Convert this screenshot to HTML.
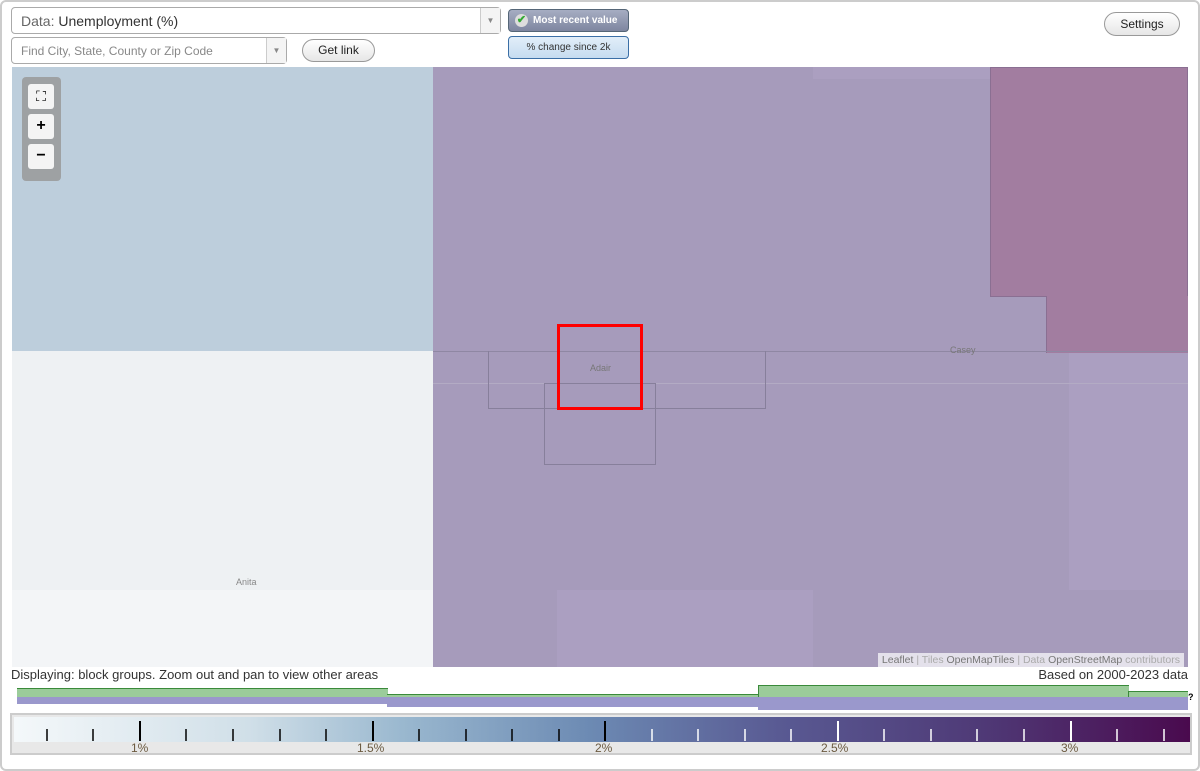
<!DOCTYPE html>
<html><head><style>
*{margin:0;padding:0;box-sizing:border-box}
body{width:1200px;height:771px;background:#fff;font-family:"Liberation Sans",sans-serif;position:relative;overflow:hidden}
.frame{position:absolute;left:0;top:0;width:1200px;height:771px;border:2px solid #ccc;border-radius:6px}
.abs{position:absolute}
.sel{border:1px solid #aaa;border-radius:4px;background:#fff}
.btn{border:1px solid #999;border-radius:13px;background:linear-gradient(#fff,#e6e6e6);font-size:12px;text-align:center;color:#222}
</style></head><body>
<div class="frame"></div>
<div class="abs sel" style="left:11px;top:7px;width:490px;height:27px"><span class="abs" style="left:9px;top:5px;font-size:14px;color:#333"><span style="color:#666">Data:</span> Unemployment (%)</span>
<div class="abs" style="right:0;top:0;width:20px;height:25px;border-left:1px solid #ccc;background:#f4f4f4;color:#888;font-size:8px;text-align:center;line-height:25px">▼</div></div>
<div class="abs sel" style="left:11px;top:37px;width:276px;height:27px"><span class="abs" style="left:9px;top:6px;font-size:12px;color:#888">Find City, State, County or Zip Code</span>
<div class="abs" style="right:0;top:0;width:20px;height:25px;border-left:1px solid #ccc;background:#f4f4f4;color:#888;font-size:8px;text-align:center;line-height:25px">▼</div></div>
<div class="abs btn" style="left:302px;top:39px;width:73px;height:23px;line-height:21px">Get link</div>
<div class="abs" style="left:508px;top:9px;width:121px;height:23px;border:1px solid #567;border-radius:4px;background:linear-gradient(#a6adc2,#7e86a0);color:#fff;font-size:10px;font-weight:bold;line-height:21px;padding-left:24px">Most recent value
<span class="abs" style="left:6px;top:4px;width:13px;height:13px;border-radius:50%;background:#ddd;color:#3a3;font-size:11px;line-height:13px;text-align:center">✔</span></div>
<div class="abs" style="left:508px;top:36px;width:121px;height:23px;border:1px solid #3b6fa6;border-radius:4px;background:linear-gradient(#e2eef9,#c6dcf0);color:#333;font-size:10px;line-height:21px;text-align:center">% change since 2k</div>
<div class="abs btn" style="left:1104px;top:12px;width:76px;height:24px;line-height:22px">Settings</div>

<div class="abs" style="left:12px;top:67px;width:1176px;height:600px;background:#a69bbb;overflow:hidden">
<div class="abs" style="left:0;top:0;width:421px;height:284px;background:#bdcedc"></div>
<div class="abs" style="left:0;top:284px;width:421px;height:316px;background:#eef1f3"></div>
<div class="abs" style="left:0;top:523px;width:421px;height:77px;background:#f3f5f7"></div>
<div class="abs" style="left:801px;top:0;width:375px;height:12px;background:#ab9fc0"></div>
<div class="abs" style="left:1057px;top:12px;width:119px;height:511px;background:#ab9fc1"></div>
<div class="abs" style="left:545px;top:523px;width:256px;height:77px;background:#ab9fc1"></div>
<div class="abs" style="left:978px;top:0;width:198px;height:230px;background:#a27da0;border:1px solid #8a6f92"></div>
<div class="abs" style="left:1034px;top:229px;width:142px;height:57px;background:#a27da0;border-left:1px solid #8a6f92"></div>
<div class="abs" style="left:421px;top:284px;width:755px;height:1px;background:#8f87a3"></div>
<div class="abs" style="left:421px;top:316px;width:755px;height:1px;background:#b3abc4"></div>
<div class="abs" style="left:476px;top:284px;width:278px;height:58px;border:1px solid #877f9b;border-top:none"></div>
<div class="abs" style="left:532px;top:316px;width:112px;height:82px;border:1px solid #877f9b"></div>
<div class="abs" style="left:545px;top:257px;width:86px;height:86px;border:3px solid #f00"></div>
<div class="abs" style="left:578px;top:296px;font-size:9px;color:#777">Adair</div>
<div class="abs" style="left:938px;top:278px;font-size:9px;color:#777">Casey</div>
<div class="abs" style="left:224px;top:510px;font-size:9px;color:#888">Anita</div>
<div class="abs" style="left:10px;top:10px;width:39px;height:104px;background:#999;border-radius:4px;opacity:.85"></div>
<div class="abs" style="left:16px;top:17px;width:26px;height:25px;background:#f4f4f4;border-radius:3px;text-align:center;font-size:14px;line-height:25px">⛶</div>
<div class="abs" style="left:16px;top:47px;width:26px;height:25px;background:#f4f4f4;border-radius:3px;text-align:center;font-weight:bold;font-size:16px;line-height:24px">+</div>
<div class="abs" style="left:16px;top:77px;width:26px;height:25px;background:#f4f4f4;border-radius:3px;text-align:center;font-weight:bold;font-size:16px;line-height:23px">−</div>
<div class="abs" style="right:4px;bottom:0;height:14px;padding:0 4px;background:rgba(255,255,255,.7);font-size:10.5px;color:#aaa;line-height:14px"><b style="color:#777;font-weight:normal">Leaflet</b> | Tiles <span style="color:#777">OpenMapTiles</span> | Data <span style="color:#777">OpenStreetMap</span> contributors</div>
</div>

<div class="abs" style="left:11px;top:667px;font-size:13px;color:#333">Displaying: block groups. Zoom out and pan to view other areas</div>
<div class="abs" style="right:12px;top:667px;font-size:13px;color:#333">Based on 2000-2023 data</div>

<div class="abs" style="left:17px;top:688px;width:371px;height:9px;background:#9bcc9a;border-top:1px solid #3a8a3a"></div>
<div class="abs" style="left:387px;top:694px;width:371px;height:3px;background:#9bcc9a;border-top:1px solid #3a8a3a"></div>
<div class="abs" style="left:758px;top:685px;width:371px;height:12px;background:#9bcc9a;border-top:1px solid #3a8a3a;border-left:1px solid #3a8a3a"></div>
<div class="abs" style="left:1128px;top:691px;width:60px;height:6px;background:#9bcc9a;border-top:1px solid #3a8a3a;border-left:1px solid #3a8a3a"></div>
<div class="abs" style="left:17px;top:697px;width:371px;height:7px;background:#9a98cc"></div>
<div class="abs" style="left:387px;top:697px;width:371px;height:10px;background:#9a98cc"></div>
<div class="abs" style="left:758px;top:697px;width:430px;height:13px;background:#9a98cc"></div>
<div class="abs" style="left:1188px;top:692px;font-size:9px;font-weight:bold">?</div>

<div class="abs" style="left:10px;top:713px;width:1182px;height:42px;border:2px solid #ccc;background:#e8e8e8">
<div class="abs" style="left:2px;top:2px;width:1176px;height:25px;background:linear-gradient(90deg,#f4f8fa,#d0dfe8 20%,#9ab8cf 33%,#6c8ab3 49%,#595a93 65%,#4f3a77 82%,#4a0a4e)"></div>
<svg class="abs" style="left:0;top:0" width="1180" height="28">
<g stroke="#000" stroke-width="1.5">
<line x1="35" y1="14" x2="35" y2="26"/><line x1="81" y1="14" x2="81" y2="26"/><line x1="128" y1="6" x2="128" y2="26" stroke-width="2"/><line x1="174" y1="14" x2="174" y2="26"/><line x1="221" y1="14" x2="221" y2="26"/><line x1="268" y1="14" x2="268" y2="26"/><line x1="314" y1="14" x2="314" y2="26"/><line x1="361" y1="6" x2="361" y2="26" stroke-width="2"/><line x1="407" y1="14" x2="407" y2="26"/><line x1="454" y1="14" x2="454" y2="26"/><line x1="500" y1="14" x2="500" y2="26"/><line x1="547" y1="14" x2="547" y2="26"/><line x1="593" y1="6" x2="593" y2="26" stroke-width="2"/>
</g>
<g stroke="#fff" stroke-width="1.5">
<line x1="640" y1="14" x2="640" y2="26"/><line x1="686" y1="14" x2="686" y2="26"/><line x1="733" y1="14" x2="733" y2="26"/><line x1="779" y1="14" x2="779" y2="26"/><line x1="826" y1="6" x2="826" y2="26" stroke-width="2"/><line x1="872" y1="14" x2="872" y2="26"/><line x1="919" y1="14" x2="919" y2="26"/><line x1="965" y1="14" x2="965" y2="26"/><line x1="1012" y1="14" x2="1012" y2="26"/><line x1="1059" y1="6" x2="1059" y2="26" stroke-width="2"/><line x1="1105" y1="14" x2="1105" y2="26"/><line x1="1152" y1="14" x2="1152" y2="26"/>
</g></svg>
<div class="abs" style="left:119px;top:26px;font-size:12px;color:#6b5a40">1%</div>
<div class="abs" style="left:345px;top:26px;font-size:12px;color:#6b5a40">1.5%</div>
<div class="abs" style="left:583px;top:26px;font-size:12px;color:#6b5a40">2%</div>
<div class="abs" style="left:809px;top:26px;font-size:12px;color:#6b5a40">2.5%</div>
<div class="abs" style="left:1049px;top:26px;font-size:12px;color:#6b5a40">3%</div>
</div>
</body></html>
